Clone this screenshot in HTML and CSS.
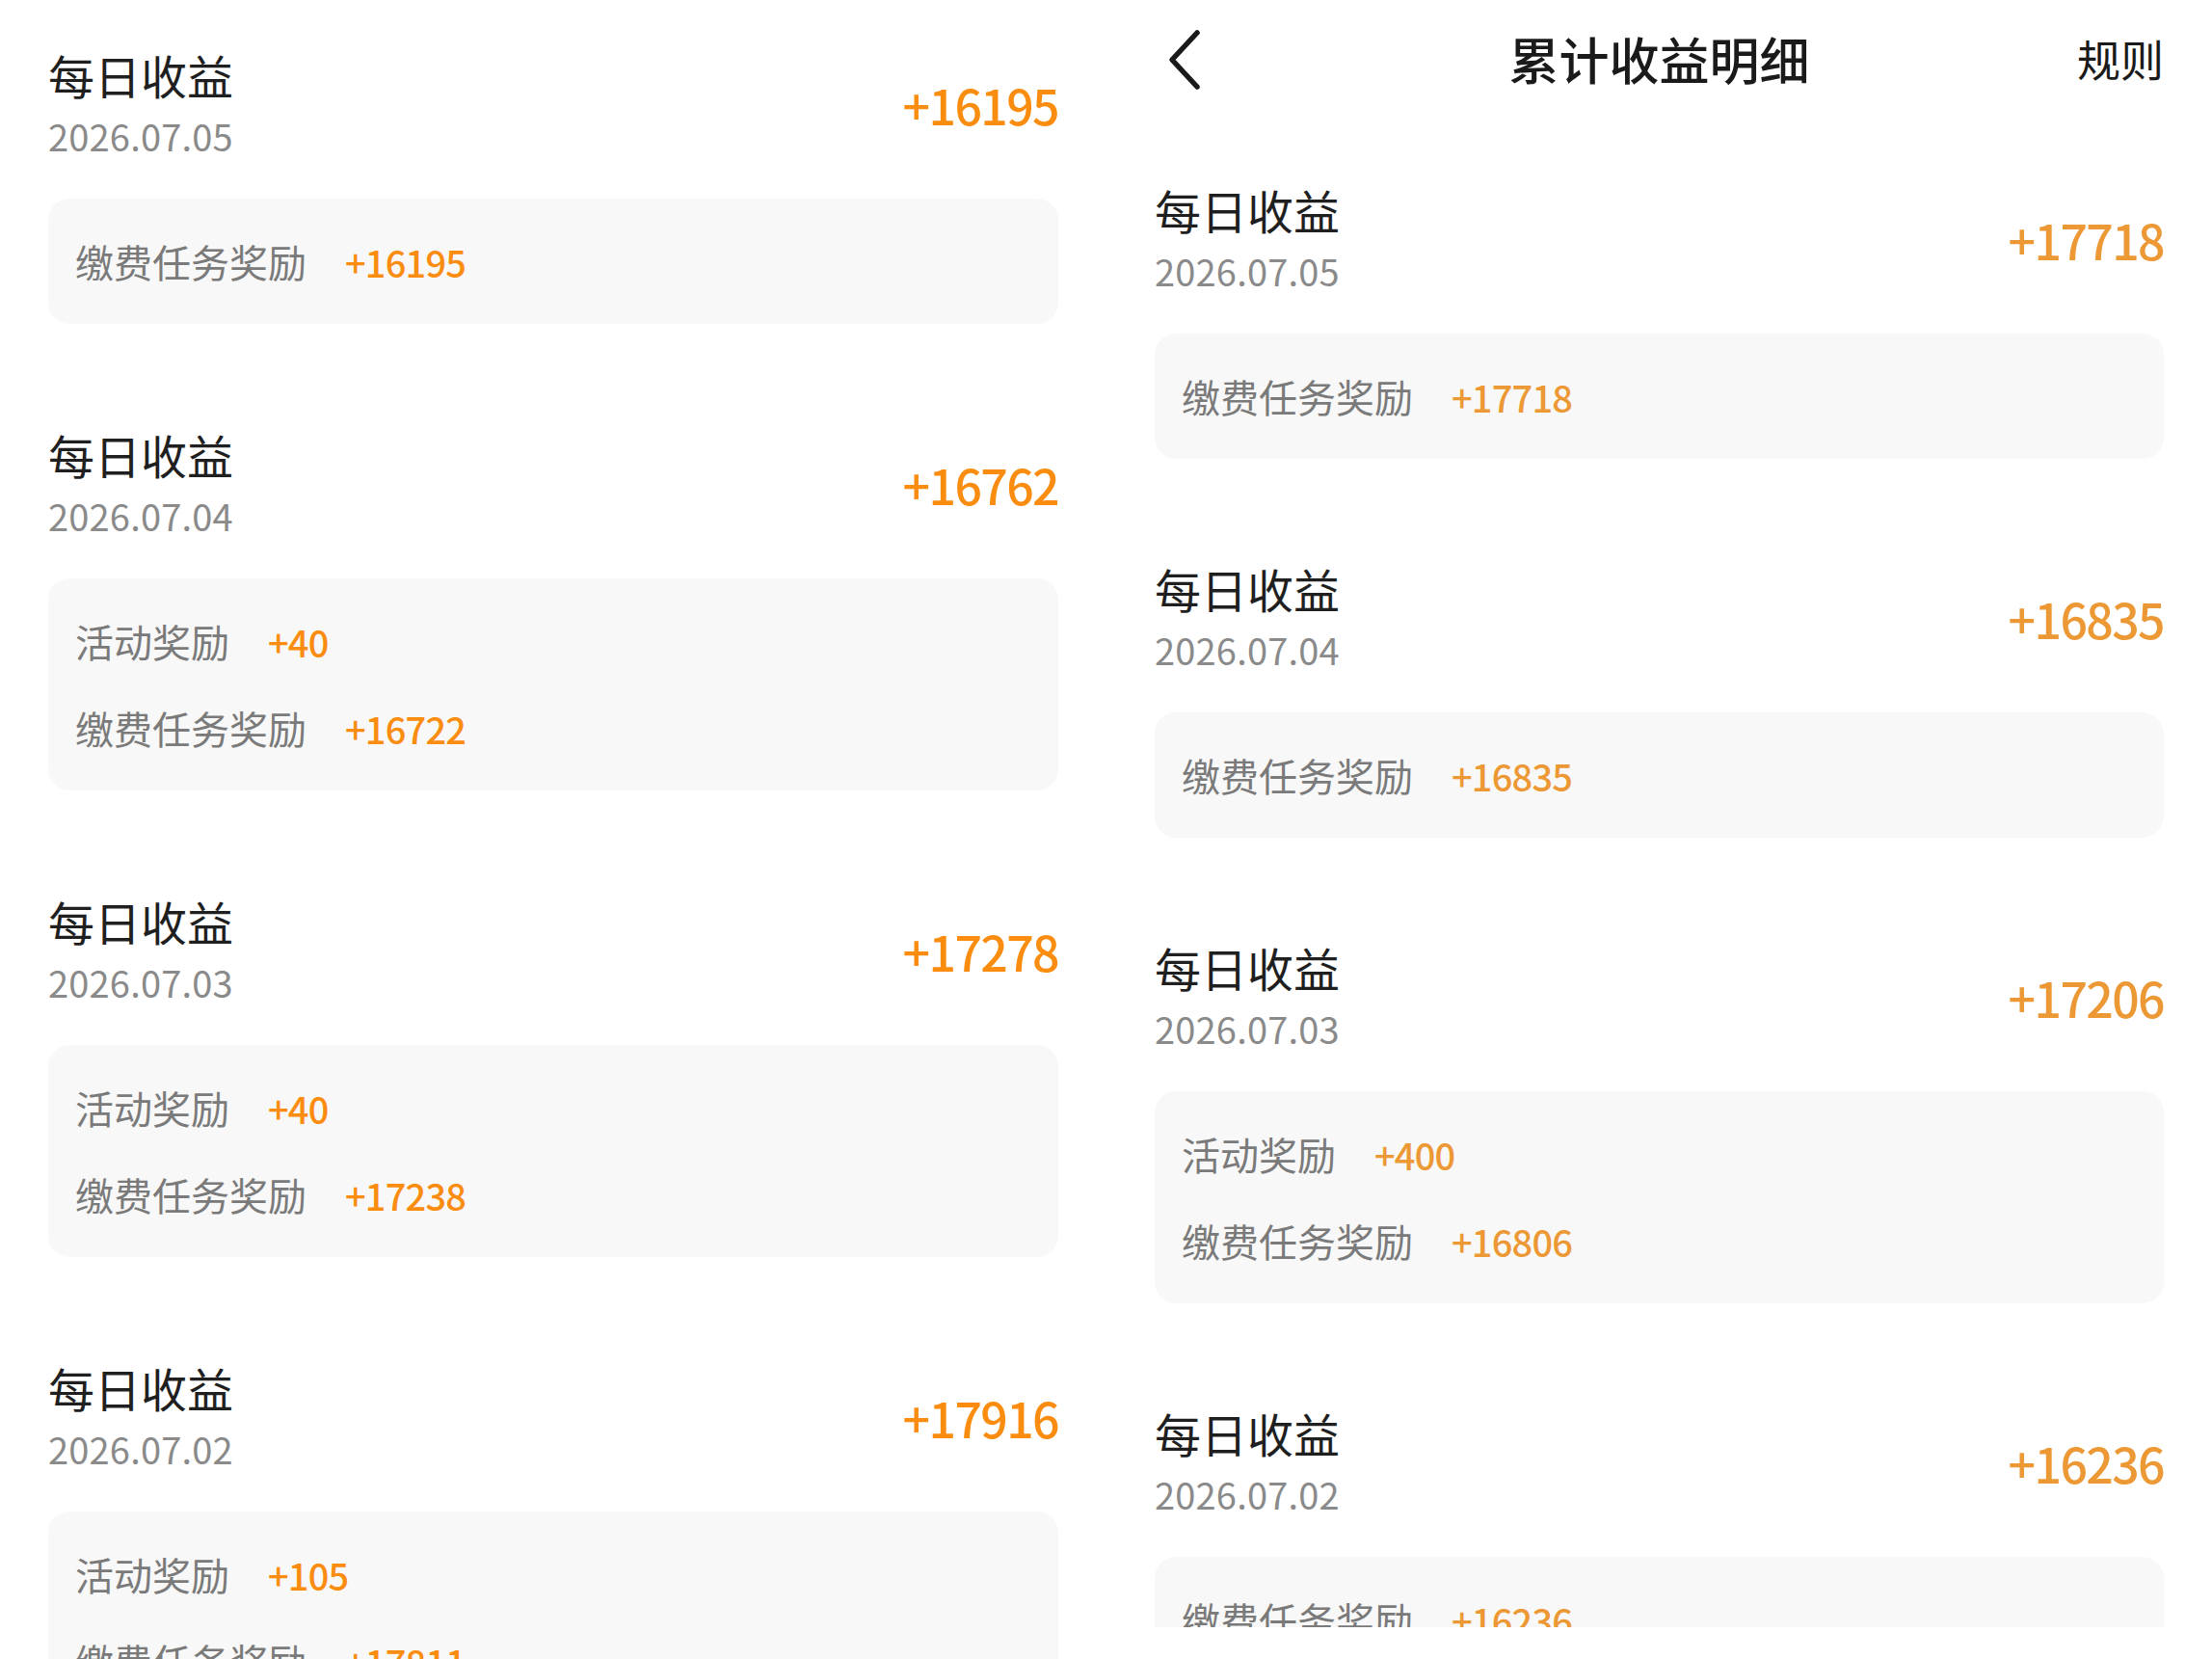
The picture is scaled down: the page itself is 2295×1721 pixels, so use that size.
FILE: index.html
```html
<!DOCTYPE html>
<html lang="zh-CN">
<head>
<meta charset="utf-8">
<title>累计收益明细</title>
<link rel="stylesheet" href="styles.css">
</head>
<body>
<div class="page">
  <section class="panel panel-left">
    <div class="list">
      <div class="entry">
        <div class="head">
          <div class="head-text">
            <div class="title">每日收益</div>
            <div class="date">2026.07.05</div>
          </div>
          <div class="amount">+16195</div>
        </div>
        <div class="card">
          <div class="row"><span class="label">缴费任务奖励</span><span class="value">+16195</span></div>
        </div>
      </div>
      <div class="entry">
        <div class="head">
          <div class="head-text">
            <div class="title">每日收益</div>
            <div class="date">2026.07.04</div>
          </div>
          <div class="amount">+16762</div>
        </div>
        <div class="card">
          <div class="row"><span class="label">活动奖励</span><span class="value">+40</span></div>
          <div class="row"><span class="label">缴费任务奖励</span><span class="value">+16722</span></div>
        </div>
      </div>
      <div class="entry">
        <div class="head">
          <div class="head-text">
            <div class="title">每日收益</div>
            <div class="date">2026.07.03</div>
          </div>
          <div class="amount">+17278</div>
        </div>
        <div class="card">
          <div class="row"><span class="label">活动奖励</span><span class="value">+40</span></div>
          <div class="row"><span class="label">缴费任务奖励</span><span class="value">+17238</span></div>
        </div>
      </div>
      <div class="entry">
        <div class="head">
          <div class="head-text">
            <div class="title">每日收益</div>
            <div class="date">2026.07.02</div>
          </div>
          <div class="amount">+17916</div>
        </div>
        <div class="card">
          <div class="row"><span class="label">活动奖励</span><span class="value">+105</span></div>
          <div class="row"><span class="label">缴费任务奖励</span><span class="value">+17811</span></div>
        </div>
      </div>
    </div>
  </section>

  <section class="panel panel-right">
    <header class="nav">
      <span class="back">
        <svg width="40" height="64" viewBox="0 0 40 64"><polyline points="32,4 6,32 32,60" fill="none" stroke="#1a1a1a" stroke-width="5.5" stroke-linecap="round" stroke-linejoin="round"/></svg>
      </span>
      <h1 class="nav-title">累计收益明细</h1>
      <span class="nav-rule">规则</span>
    </header>
    <div class="list list-right">
      <div class="entry">
        <div class="head">
          <div class="head-text">
            <div class="title">每日收益</div>
            <div class="date">2026.07.05</div>
          </div>
          <div class="amount">+17718</div>
        </div>
        <div class="card">
          <div class="row"><span class="label">缴费任务奖励</span><span class="value">+17718</span></div>
        </div>
      </div>
      <div class="entry">
        <div class="head">
          <div class="head-text">
            <div class="title">每日收益</div>
            <div class="date">2026.07.04</div>
          </div>
          <div class="amount">+16835</div>
        </div>
        <div class="card">
          <div class="row"><span class="label">缴费任务奖励</span><span class="value">+16835</span></div>
        </div>
      </div>
      <div class="entry">
        <div class="head">
          <div class="head-text">
            <div class="title">每日收益</div>
            <div class="date">2026.07.03</div>
          </div>
          <div class="amount">+17206</div>
        </div>
        <div class="card">
          <div class="row"><span class="label">活动奖励</span><span class="value">+400</span></div>
          <div class="row"><span class="label">缴费任务奖励</span><span class="value">+16806</span></div>
        </div>
      </div>
      <div class="entry">
        <div class="head">
          <div class="head-text">
            <div class="title">每日收益</div>
            <div class="date">2026.07.02</div>
          </div>
          <div class="amount">+16236</div>
        </div>
        <div class="card">
          <div class="row"><span class="label">缴费任务奖励</span><span class="value">+16236</span></div>
        </div>
      </div>
    </div>
  </section>
</div>
</body>
</html>
```
FILE: styles.css
```css
* { box-sizing: border-box; margin: 0; padding: 0; }
html, body { background: #ffffff; }
body {
  font-family: "Noto Sans CJK SC", "Noto Sans", sans-serif;
  color: #1f1f1f;
  width: 2295px;
  height: 1721px;
  overflow: hidden;
}
.page {
  display: flex;
  width: 2295px;
  height: 1721px;
  align-items: flex-start;
}
.panel {
  padding: 0 50px;
  overflow: hidden;
}
.panel-left {
  width: 1148px;
  height: 1721px;
}
.panel-right {
  width: 1147px;
  height: 1688px;
}
.list {
  padding-top: 44px;
}
.list-right {
  padding-top: 60px;
}
.entry {
  margin-bottom: 102px;
}
.list-right .entry {
  margin-bottom: 101px;
}
.head {
  display: flex;
  justify-content: space-between;
  align-items: center;
}
.title {
  font-size: 48px;
  line-height: 66px;
  color: #1f1f1f;
}
.date {
  font-size: 38px;
  line-height: 62px;
  color: #8a8a8a;
  letter-spacing: 0.2px;
}
.amount {
  font-size: 50px;
  line-height: 66px;
  font-weight: 500;
  letter-spacing: -1.6px;
  color: #fa8c10;
}
.card {
  margin-top: 34px;
  background: #f8f8f8;
  border-radius: 22px;
  padding: 20px 28px;
}
.row {
  display: flex;
  align-items: center;
  height: 90px;
  gap: 40px;
}
.label {
  font-size: 40px;
  color: #7a7a7a;
}
.value {
  font-size: 38px;
  font-weight: 500;
  letter-spacing: -0.8px;
  color: #fa8c10;
}
.panel-right .amount,
.panel-right .value {
  color: #ec9835;
}
.nav {
  height: 124px;
  display: flex;
  align-items: center;
  justify-content: space-between;
  position: relative;
}
.back {
  display: flex;
  align-items: center;
  margin-left: 12px;
}
.nav-title {
  position: absolute;
  left: 0;
  right: 0;
  top: 0;
  bottom: 0;
  display: flex;
  align-items: center;
  justify-content: center;
  font-size: 52px;
  font-weight: 500;
  color: #1a1a1a;
  pointer-events: none;
  padding-bottom: 4px;
}
.nav-rule {
  font-size: 45px;
  color: #1a1a1a;
  padding-bottom: 4px;
}
```
